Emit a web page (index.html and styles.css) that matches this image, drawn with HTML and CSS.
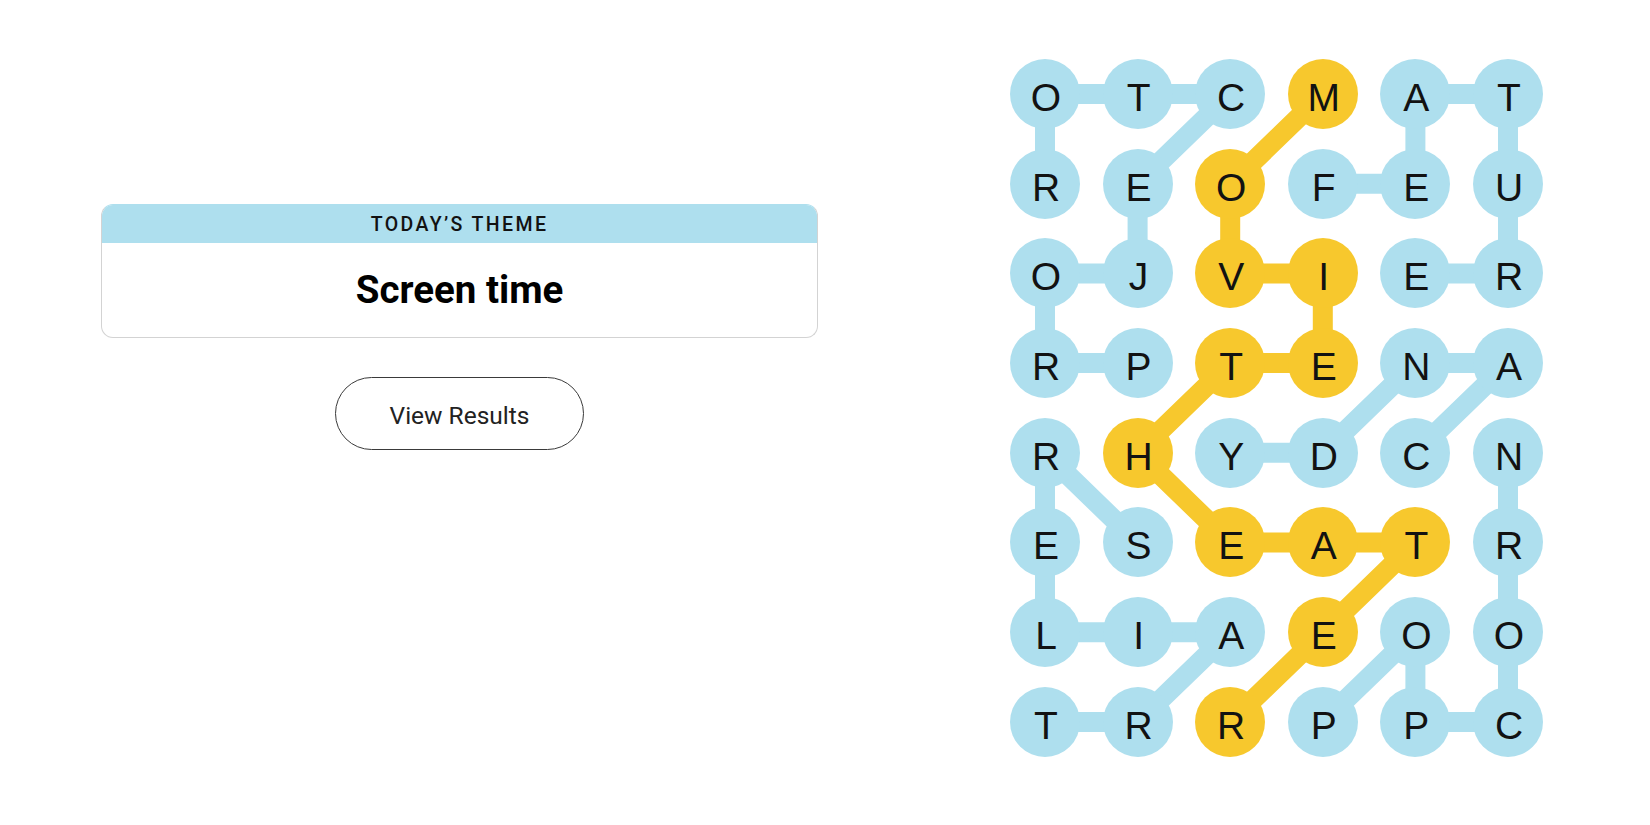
FILE: index.html
```html
<!DOCTYPE html>
<html lang="en">
<head>
<meta charset="utf-8">
<title>Strands</title>
<link rel="stylesheet" href="styles.css">
</head>
<body>
<main class="page">
  <section class="left">
    <div class="theme-card">
      <div class="theme-header">TODAY’S THEME</div>
      <div class="theme-body">Screen time</div>
    </div>
    <button class="results-btn" type="button">View Results</button>
  </section>
  <section class="board-wrap">
    <div class="board">
      <svg class="connectors" width="533" height="698" viewBox="0 0 533 698">
        <g class="found">
          <polyline points="127.6,304.1 35,304.1 35,214.4 127.6,214.4 127.6,124.7 220.2,35 127.6,35 35,35 35,124.7"/>
          <polyline points="312.8,124.7 405.4,124.7 405.4,35 498,35 498,124.7 498,214.4 405.4,214.4"/>
          <polyline points="405.4,393.8 498,304.1 405.4,304.1 312.8,393.8 220.2,393.8"/>
          <polyline points="312.8,662.9 405.4,573.2 405.4,662.9 498,662.9 498,573.2 498,483.5 498,393.8"/>
          <polyline points="35,662.9 127.6,662.9 220.2,573.2 127.6,573.2 35,573.2 35,483.5 35,393.8 127.6,483.5"/>
        </g>
        <g class="span">
          <polyline points="312.8,35 220.2,124.7 220.2,214.4 312.8,214.4 312.8,304.1 220.2,304.1 127.6,393.8 220.2,483.5 312.8,483.5 405.4,483.5 312.8,573.2 220.2,662.9"/>
        </g>
      </svg>
      <div class="grid">
        <div class="cell">O</div><div class="cell">T</div><div class="cell">C</div><div class="cell span-cell">M</div><div class="cell">A</div><div class="cell">T</div>
        <div class="cell">R</div><div class="cell">E</div><div class="cell span-cell">O</div><div class="cell">F</div><div class="cell">E</div><div class="cell">U</div>
        <div class="cell">O</div><div class="cell">J</div><div class="cell span-cell">V</div><div class="cell span-cell">I</div><div class="cell">E</div><div class="cell">R</div>
        <div class="cell">R</div><div class="cell">P</div><div class="cell span-cell">T</div><div class="cell span-cell">E</div><div class="cell">N</div><div class="cell">A</div>
        <div class="cell">R</div><div class="cell span-cell">H</div><div class="cell">Y</div><div class="cell">D</div><div class="cell">C</div><div class="cell">N</div>
        <div class="cell">E</div><div class="cell">S</div><div class="cell span-cell">E</div><div class="cell span-cell">A</div><div class="cell span-cell">T</div><div class="cell">R</div>
        <div class="cell">L</div><div class="cell">I</div><div class="cell">A</div><div class="cell span-cell">E</div><div class="cell">O</div><div class="cell">O</div>
        <div class="cell">T</div><div class="cell">R</div><div class="cell span-cell">R</div><div class="cell">P</div><div class="cell">P</div><div class="cell">C</div>
      </div>
    </div>
  </section>
</main>
</body>
</html>
```

FILE: styles.css
```css
html, body {
  margin: 0;
  padding: 0;
  background: #ffffff;
}

body {
  font-family: Roboto, "Liberation Sans", sans-serif;
  color: #121212;
}

.page {
  display: flex;
  align-items: flex-start;
  width: 1650px;
  height: 825px;
  overflow: hidden;
}

.left {
  width: 717px;
  margin-left: 101px;
  padding-top: 204px;
  display: flex;
  flex-direction: column;
  align-items: center;
}

.theme-card {
  width: 100%;
  box-sizing: border-box;
  border: 1px solid #d3d3d3;
  border-top-color: #aedfee;
  border-radius: 12px;
  overflow: hidden;
  background: #ffffff;
}

.theme-header {
  height: 38px;
  line-height: 40px;
  background: #aedfee;
  text-align: center;
  font-size: 19.5px;
  font-weight: 500;
  letter-spacing: 2.4px;
  color: #121212;
}

.theme-body {
  height: 94px;
  display: flex;
  align-items: center;
  justify-content: center;
  padding-bottom: 2px;
  box-sizing: border-box;
  font-size: 38.5px;
  font-weight: 700;
  color: #000000;
}

.results-btn {
  margin-top: 39px;
  width: 249px;
  height: 73px;
  box-sizing: border-box;
  border: 1px solid #3a3a3a;
  border-radius: 37px;
  background: #ffffff;
  font-family: Roboto, "Liberation Sans", sans-serif;
  font-size: 24.5px;
  color: #222222;
  padding: 3px 0 0 0;
}

.board-wrap {
  margin-left: 192px;
  padding-top: 59px;
}

.board {
  position: relative;
  width: 533px;
  height: 698px;
}

.connectors {
  position: absolute;
  left: 0;
  top: 0;
}

.connectors polyline {
  fill: none;
  stroke-width: 20;
  stroke-linejoin: round;
  stroke-linecap: round;
}

.found polyline {
  stroke: #aedfee;
}

.span polyline {
  stroke: #f7c82d;
}

.grid {
  position: relative;
  display: grid;
  grid-template-columns: repeat(6, 70px);
  grid-template-rows: repeat(8, 70px);
  column-gap: 22.6px;
  row-gap: 19.7px;
}

.cell {
  width: 70px;
  height: 70px;
  box-sizing: border-box;
  padding-top: 8px;
  padding-left: 2px;
  border-radius: 50%;
  background: #aedfee;
  display: flex;
  align-items: center;
  justify-content: center;
  font-family: "Liberation Sans", Arial, sans-serif;
  font-size: 39px;
  font-weight: 400;
  color: #121212;
}

.span-cell {
  background: #f7c82d;
}
```
